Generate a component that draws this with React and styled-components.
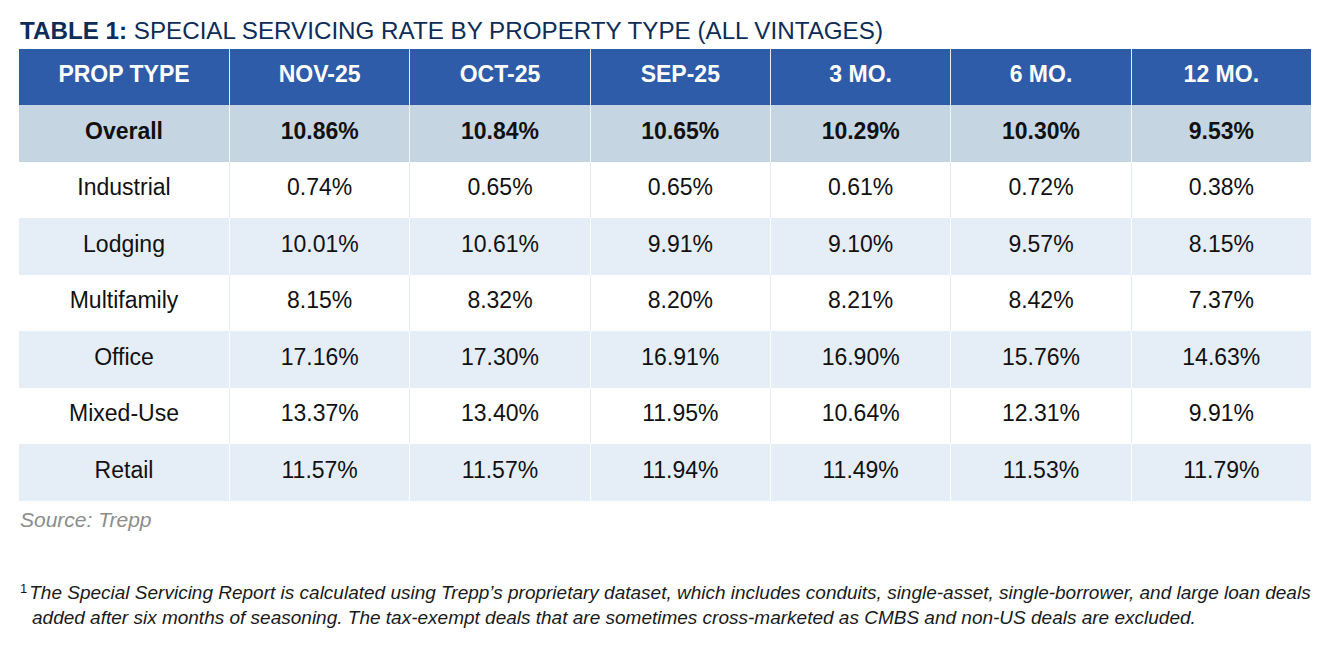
import React from "react";
import styled, { createGlobalStyle } from "styled-components";

const Global = createGlobalStyle`
  html, body { margin: 0; padding: 0; background: #ffffff; }
  body { font-family: "Liberation Sans", Arial, sans-serif; }
`;

const Page = styled.div`
  width: 1341px;
  height: 646px;
  box-sizing: border-box;
  padding: 17px 20px 0 19px;
  display: flex;
  flex-direction: column;
`;

const Title = styled.h1`
  margin: 0 0 4px 1px;
  font-size: 24.2px;
  font-weight: 400;
  color: #0d2c57;
  line-height: 28px;
  white-space: nowrap;
  b { font-weight: 700; }
`;

const Grid = styled.div`
  display: grid;
  grid-template-columns: 210px repeat(6, 1fr);
  width: 1292px;
`;

const Cell = styled.div`
  height: ${(p) => p.$h || 56.5}px;
  display: flex;
  align-items: center;
  justify-content: center;
  padding-bottom: ${(p) => p.$lift || 4}px;
  font-size: 23px;
  box-sizing: border-box;
  border-left: ${(p) => (p.$first ? "none" : `1px solid ${p.$line}`)};
  background: ${(p) => p.$bg};
  color: ${(p) => p.$color};
  font-weight: ${(p) => (p.$bold ? 700 : 400)};
`;

const Source = styled.div`
  margin: 7px 0 0 1px;
  font-size: 21px;
  line-height: 24px;
  font-style: italic;
  color: #8c8c8c;
`;

const Footnote = styled.p`
  margin: 48px 0 0 1px;
  font-size: 19px;
  font-style: italic;
  line-height: 25px;
  color: #1a1a1a;
  padding-left: 12px;
  text-indent: -12px;
  sup {
    font-style: normal;
    font-size: 13px;
    vertical-align: 6px;
    margin-right: 2px;
    line-height: 0;
  }
`;

const header = ["PROP TYPE", "NOV-25", "OCT-25", "SEP-25", "3 MO.", "6 MO.", "12 MO."];
const rows = [
  ["Overall", "10.86%", "10.84%", "10.65%", "10.29%", "10.30%", "9.53%"],
  ["Industrial", "0.74%", "0.65%", "0.65%", "0.61%", "0.72%", "0.38%"],
  ["Lodging", "10.01%", "10.61%", "9.91%", "9.10%", "9.57%", "8.15%"],
  ["Multifamily", "8.15%", "8.32%", "8.20%", "8.21%", "8.42%", "7.37%"],
  ["Office", "17.16%", "17.30%", "16.91%", "16.90%", "15.76%", "14.63%"],
  ["Mixed-Use", "13.37%", "13.40%", "11.95%", "10.64%", "12.31%", "9.91%"],
  ["Retail", "11.57%", "11.57%", "11.94%", "11.49%", "11.53%", "11.79%"],
];

export default function App() {
  return (
    <Page>
      <Global />
      <Title>
        <b>TABLE 1:</b> SPECIAL SERVICING RATE BY PROPERTY TYPE (ALL VINTAGES)
      </Title>
      <Grid>
        {header.map((h, i) => (
          <Cell key={h} $first={i === 0} $h={56} $lift={6} $bg="#2e5ca8" $color="#ffffff" $line="#e8eef6" $bold>
            {h}
          </Cell>
        ))}
        {rows.map((r, ri) => {
          const overall = ri === 0;
          const light = ri % 2 === 0;
          const bg = overall ? "#c6d5e2" : light ? "#e5edf6" : "#ffffff";
          const line = overall ? "#f2f5f9" : light ? "#ffffff" : "#e6ecf3";
          return r.map((v, ci) => (
            <Cell key={ri + "-" + ci} $first={ci === 0} $bg={bg} $color="#111111" $line={line} $bold={overall}>
              {v}
            </Cell>
          ));
        })}
      </Grid>
      <Source>Source: Trepp</Source>
      <Footnote>
        <sup>1</sup>The Special Servicing Report is calculated using Trepp’s proprietary dataset, which includes conduits, single-asset, single-borrower, and large loan deals added after six months of seasoning. The tax-exempt deals that are sometimes cross-marketed as CMBS and non-US deals are excluded.
      </Footnote>
    </Page>
  );
}
